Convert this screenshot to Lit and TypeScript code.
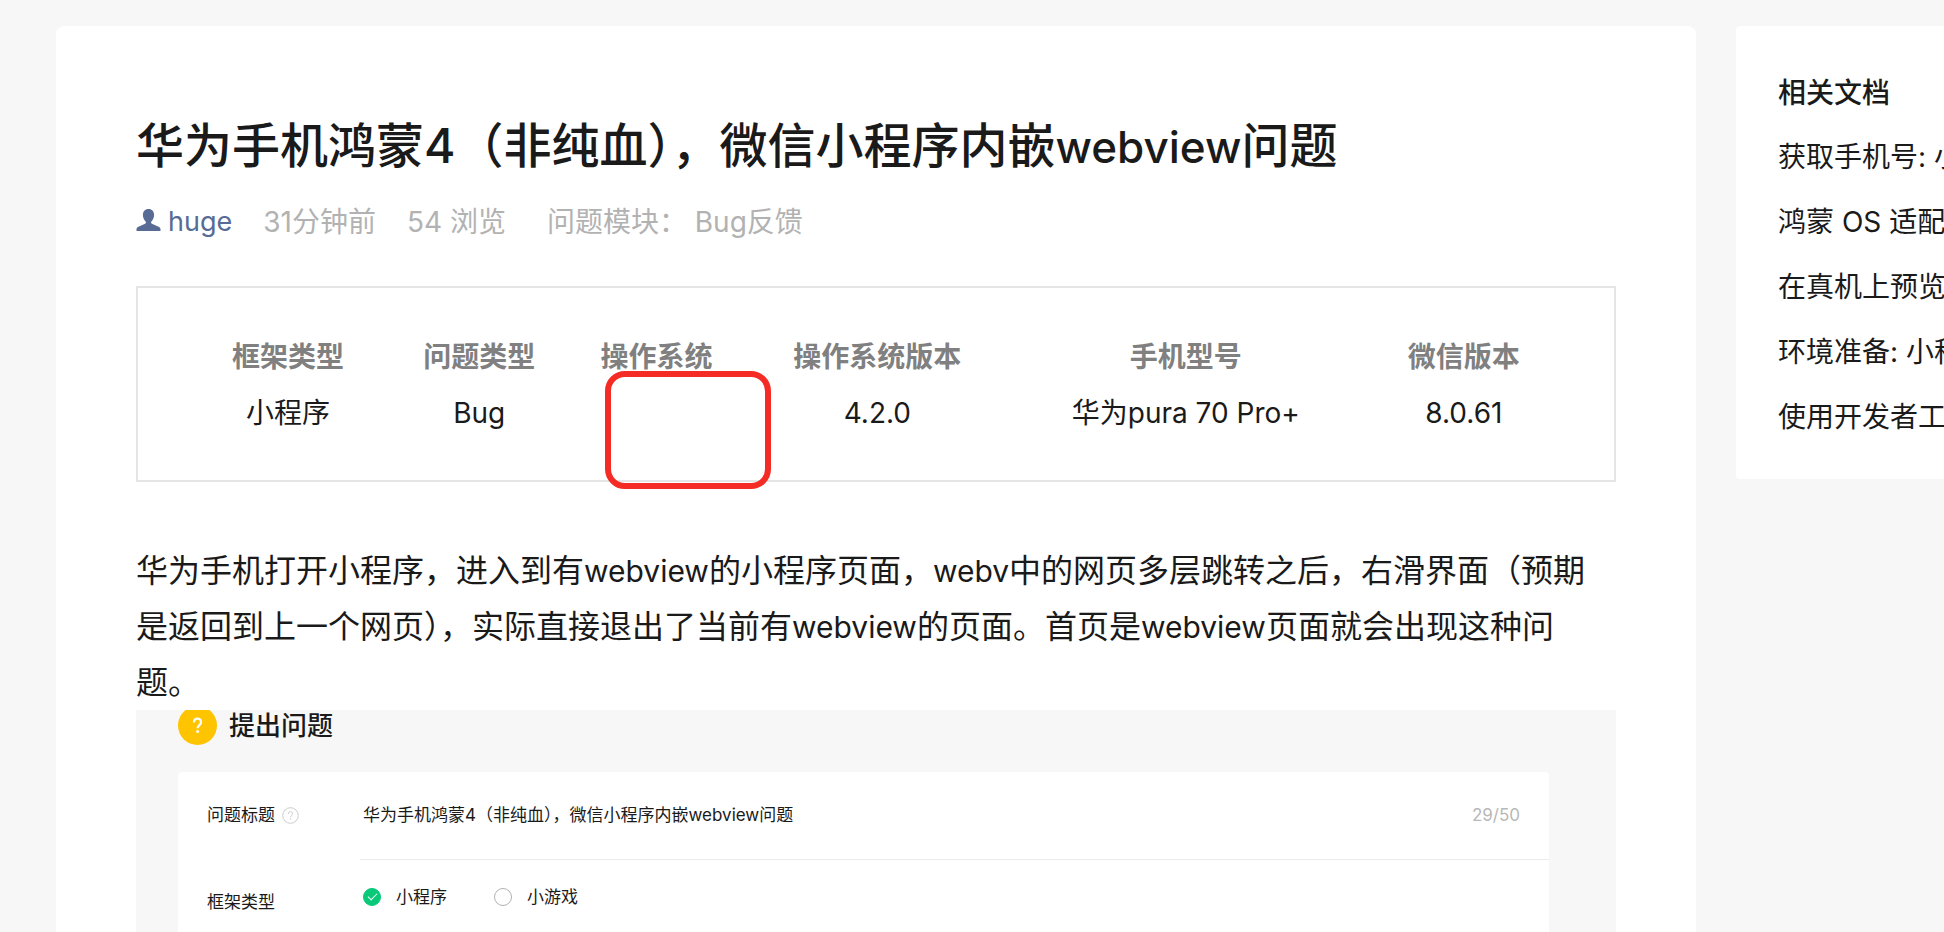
import { LitElement, html, css } from "lit";
import { customElement, state } from "lit/decorators.js";

interface Spec {
  name: string;
  value: string;
  width: number;
  marked?: boolean;
}

const SPECS: Spec[] = [
  { name: "框架类型", value: "小程序", width: 14.8 },
  { name: "问题类型", value: "Bug", width: 12.9 },
  { name: "操作系统", value: "", width: 12.8, marked: true },
  { name: "操作系统版本", value: "4.2.0", width: 19.2 },
  { name: "手机型号", value: "华为pura 70 Pro+", width: 25.5 },
  { name: "微信版本", value: "8.0.61", width: 14.8 },
];

const DOCS = ["获取手机号: 小", "鸿蒙 OS 适配", "在真机上预览", "环境准备: 小程", "使用开发者工"];

const TITLE = "华为手机鸿蒙4（非纯血），微信小程序内嵌webview问题";

const BODY =
  "华为手机打开小程序，进入到有webview的小程序页面，webv中的网页多层跳转之后，右滑界面（预期是返回到上一个网页），实际直接退出了当前有webview的页面。首页是webview页面就会出现这种问题。";

// Latin words are set slightly smaller than the Chinese text around them.
const mixed = (text: string) =>
  text.split(/([a-z]+)/).map((part) => (/^[a-z]+$/.test(part) ? html`<span class="latin">${part}</span>` : part));

@customElement("question-form")
class QuestionForm extends LitElement {
  @state() private subject = TITLE;

  static styles = css`
    :host {
      display: flex;
      flex-direction: column;
      flex: 1;
      overflow: hidden;
      background: #f7f7f7;
      padding: 0 67px 0 42px;
      font-size: 17px;
      line-height: 24px;
    }
    .head {
      display: flex;
      align-items: center;
      gap: 12px;
      margin: -4px 0 27px;
    }
    .head h2 {
      margin: 0;
      font-size: 26px;
      line-height: 38px;
      font-weight: 500;
    }
    .badge {
      width: 39px;
      height: 39px;
      display: block;
    }
    .sheet {
      flex: 1;
      background: #fff;
      border-radius: 4px 4px 0 0;
      padding-left: 29px;
      display: grid;
      grid-template-columns: 153px minmax(0, 1fr);
      grid-template-rows: 88px minmax(72px, 1fr);
    }
    .label {
      display: flex;
      align-items: center;
      align-self: start;
      gap: 7px;
      padding-top: 31px;
    }
    .label.second {
      padding-top: 30px;
    }
    .hint {
      display: block;
      width: 17px;
      height: 17px;
    }
    .field {
      display: flex;
      align-items: flex-start;
      padding: 31px 29px 0 3px;
      border-bottom: 1px solid #ebebeb;
      box-sizing: border-box;
    }
    .field input {
      flex: 1;
      min-width: 0;
      border: 0;
      padding: 0;
      margin: 0;
      outline: none;
      background: none;
      color: inherit;
      font: inherit;
      height: 24px;
    }
    .count {
      color: #b8b8b8;
    }
    .options {
      display: flex;
      align-items: flex-start;
      gap: 47px;
      border: 0;
      margin: 0;
      padding: 25px 0 0 3px;
    }
    .option {
      display: flex;
      align-items: center;
      gap: 15px;
    }
    .option input {
      appearance: none;
      display: grid;
      place-items: center;
      width: 18px;
      height: 18px;
      margin: 0;
      box-sizing: border-box;
      border: 1px solid #b2b2b2;
      border-radius: 50%;
      background: #fff;
    }
    .option input:checked {
      border-color: #07c978;
      background: #07c978;
    }
    .option input:checked::before {
      content: "";
      width: 8px;
      height: 4px;
      margin-bottom: 3px;
      border: solid #fff;
      border-width: 0 0 1px 1px;
      transform: rotate(-45deg);
    }
  `;

  render() {
    return html`
      <div class="head">
        <svg class="badge" viewBox="0 0 39 39" aria-hidden="true">
          <circle cx="19.5" cy="19.5" r="19.5" fill="#ffc400" />
          <path d="M16 16.600c0-2.400 1.400-3.900 3.500-3.900s3.500 1.500 3.500 3.500c0 2.900-3.400 2.900-3.400 6" fill="none" stroke="#fff" stroke-width="2.200" />
          <circle cx="19.6" cy="25.6" r="1.500" fill="#fff" />
        </svg>
        <h2>提出问题</h2>
      </div>
      <div class="sheet">
        <div class="label">
          <label for="subject">问题标题</label>
          <svg class="hint" viewBox="0 0 17 17" fill="none" stroke="#ccc" aria-hidden="true">
            <circle cx="8.5" cy="8.5" r="7.8" />
            <path d="M6.3 7c0-1.500 .9-2.400 2.200-2.400s2.200.9 2.200 2.100c0 1.700-2.200 1.800-2.200 3.500M8.500 11.300v1.300" />
          </svg>
        </div>
        <div class="field">
          <input
            id="subject"
            type="text"
            maxlength="50"
            .value=${this.subject}
            @input=${(e: Event) => (this.subject = (e.target as HTMLInputElement).value)}
          />
          <span class="count">${this.subject === TITLE ? 29 : this.subject.length}/50</span>
        </div>
        <div class="label second" id="kind">框架类型</div>
        <div class="options" role="radiogroup" aria-labelledby="kind">
          <label class="option"><input type="radio" name="kind" checked />小程序</label>
          <label class="option"><input type="radio" name="kind" />小游戏</label>
        </div>
      </div>
    `;
  }
}

@customElement("app-root")
class AppRoot extends LitElement {
  static styles = css`
    :host {
      display: grid;
      grid-template-columns: minmax(0, 1fr) 208px;
      column-gap: 40px;
      box-sizing: border-box;
      min-height: 100vh;
      padding: 26px 0 0 56px;
      background: #f7f7f7;
      color: #1a1a1a;
      font-family: Inter, "Noto Sans CJK SC", sans-serif;
      font-size: 28px;
      line-height: 44px;
    }
    a {
      color: inherit;
      text-decoration: none;
    }
    .post {
      display: flex;
      flex-direction: column;
      background: #fff;
      border-radius: 8px 8px 0 0;
      padding: 88px 80px 0;
    }
    h1 {
      margin: 0;
      font-size: 48px;
      line-height: 64px;
      font-weight: 500;
    }
    .latin {
      line-height: 1;
    }
    h1 .latin {
      font-size: 44px;
    }
    .meta {
      display: flex;
      align-items: center;
      gap: 31px;
      margin-top: 22px;
      color: #b2b2b2;
    }
    .author {
      display: flex;
      align-items: center;
      gap: 7px;
      color: #576b95;
      font-size: 27px;
    }
    .author svg {
      width: 25px;
      height: 24px;
      margin-bottom: 4px;
    }
    .module {
      margin-left: 10px;
    }
    .specs {
      margin-top: 42px;
      border: 2px solid #e5e5e5;
      padding: 41px 48px 39px;
    }
    table {
      width: 100%;
      table-layout: fixed;
      border-collapse: collapse;
      text-align: center;
      white-space: nowrap;
    }
    th,
    td {
      padding: 6px 0;
      height: 44px;
    }
    th {
      color: #808080;
      font-weight: 700;
    }
    td {
      position: relative;
    }
    .mark {
      position: absolute;
      left: 37px;
      top: -14px;
      box-sizing: border-box;
      width: 166px;
      height: 118px;
      border: 6px solid #f42c25;
      border-radius: 20px;
      pointer-events: none;
    }
    .body {
      margin: 61px 0 -1px;
      font-size: 32px;
      line-height: 56px;
    }
    .body .latin {
      font-size: 30px;
    }
    .docs {
      align-self: start;
      overflow: hidden;
      box-sizing: border-box;
      background: #fff;
      border-radius: 4px 0 0 4px;
      padding: 45px 0 39px 42px;
      white-space: nowrap;
    }
    .docs h2 {
      margin: 0;
      font-size: 28px;
      line-height: 44px;
      font-weight: 500;
    }
    .docs ul {
      list-style: none;
      margin: 0;
      padding: 0;
    }
    .docs li {
      margin-top: 20px;
      line-height: 45px;
    }
  `;

  render() {
    return html`
      <article class="post">
        <h1>${mixed(TITLE)}</h1>
        <div class="meta">
          <a class="author" href="#huge">
            <svg viewBox="0 0 25 24" fill="#576b95" aria-hidden="true">
              <path d="M12.500 1c3.600 0 5.600 2.600 5.600 6 0 2.600-1.300 5-2.700 6.400-.6.700-.4 1.900.5 2.300l6.700 3c1.200.6 1.900 1.500 1.900 2.700V23H.5v-1.600c0-1.200.7-2.100 1.900-2.700l6.700-3c.9-.4 1.100-1.600.5-2.300C8.200 12 6.900 9.600 6.900 7c0-3.400 2-6 5.600-6z" />
            </svg>
            huge
          </a>
          <span>31分钟前</span>
          <span>54 浏览</span>
          <span class="module">问题模块： Bug反馈</span>
        </div>
        <div class="specs">
          <table>
            <colgroup>
              ${SPECS.map((s) => html`<col style="width:${s.width}%" />`)}
            </colgroup>
            <thead>
              <tr>${SPECS.map((s) => html`<th scope="col">${s.name}</th>`)}</tr>
            </thead>
            <tbody>
              <tr>
                ${SPECS.map((s) => html`<td>${s.value}${s.marked ? html`<span class="mark"></span>` : ""}</td>`)}
              </tr>
            </tbody>
          </table>
        </div>
        <p class="body">${mixed(BODY)}</p>
        <question-form></question-form>
      </article>
      <aside class="docs">
        <h2>相关文档</h2>
        <ul>
          ${DOCS.map((d) => html`<li><a href="#doc">${d}</a></li>`)}
        </ul>
      </aside>
    `;
  }
}
